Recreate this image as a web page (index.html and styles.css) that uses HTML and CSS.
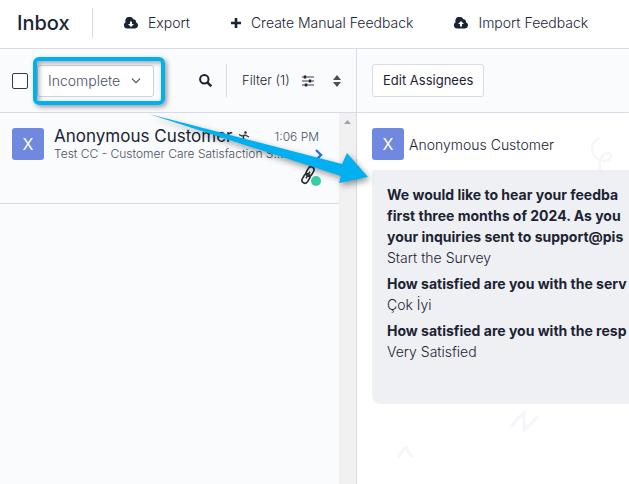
FILE: index.html
```html
<!DOCTYPE html>
<html lang="en">
<head>
  <meta charset="utf-8">
  <title>Inbox</title>
  <link rel="stylesheet" href="styles.css">
</head>
<body>
  <header class="topbar">
    <h1>Inbox</h1>
    <nav class="actions">
      <button class="action">
        <svg width="14" height="12" viewBox="0 0 14 12"><path fill="#1b2433" d="M3.500 11.500A3.300 3.300 0 0 1 1.600 5.300 4 4 0 0 1 9.300 2.300a2.400 2.400 0 0 1 2.600 3A3.200 3.200 0 0 1 11 11.500z"/><path fill="#fff" d="M6 4.500h2v2.500h2L7 10 4 7h2z"/></svg>
        Export
      </button>
      <button class="action">
        <svg width="10" height="10" viewBox="0 0 10 10"><path stroke="#1b2433" stroke-width="2.600" d="M5 0v10M0 5h10"/></svg>
        Create Manual Feedback
      </button>
      <button class="action">
        <svg width="14" height="12" viewBox="0 0 14 12"><path fill="#1b2433" d="M3.500 11.500A3.300 3.300 0 0 1 1.600 5.300 4 4 0 0 1 9.300 2.300a2.400 2.400 0 0 1 2.600 3A3.200 3.200 0 0 1 11 11.500z"/><path fill="#fff" d="M6 9.500h2V7h2L7 4 4 7h2z"/></svg>
        Import Feedback
      </button>
    </nav>
  </header>

  <main class="panes">
    <section class="list">
      <div class="toolbar">
        <input type="checkbox" class="check" aria-label="Select all">
        <div class="status">
          <select class="status-select" aria-label="Status">
            <option>Incomplete</option>
          </select>
          <svg class="chevron" width="10" height="6" viewBox="0 0 10 6"><path fill="none" stroke="#4b5163" stroke-width="1.200" d="M1 .7l4 4 4-4"/></svg>
          <span class="highlight"></span>
        </div>
        <button class="icon-button search" aria-label="Search">
          <svg width="13" height="13" viewBox="0 0 13 13"><circle cx="5.300" cy="5.300" r="4.200" fill="none" stroke="#1b2433" stroke-width="2"/><path stroke="#1b2433" stroke-width="2.400" d="M8.300 8.300l4 4"/></svg>
        </button>
        <button class="filter">
          Filter (1)
          <svg width="12" height="12" viewBox="0 0 12 12"><path stroke="#343b4b" stroke-width="1.200" d="M0 2h12M0 6h12M0 10h12"/><path stroke="#1b2433" stroke-width="2.400" d="M3 .5v3M8 4.500v3M4 8.500v3"/></svg>
        </button>
        <button class="icon-button sort" aria-label="Sort">
          <svg width="8" height="12" viewBox="0 0 8 12"><path fill="#4a4d55" d="M0 5l4-5 4 5zM0 7h8l-4 5z"/></svg>
        </button>
      </div>

      <div class="list-body">
        <article class="item">
          <span class="avatar">X</span>
          <div class="item-main">
            <div class="item-top">
              <strong class="name">Anonymous Customer</strong>
              <svg class="source" width="12" height="12" viewBox="0 0 12 12"><circle cx="7.500" cy="1.500" r="1.300" fill="#2a3042"/><path fill="none" stroke="#2a3042" stroke-width="1.300" d="M1 3.500l3 1.500 3-1 4 2M6 4.500l-1 3-4 2M5 7l4 4"/></svg>
              <time>1:06 PM</time>
            </div>
            <div class="item-sub">
              <span>Test CC - Customer Care Satisfaction S...</span>
              <svg width="8" height="12" viewBox="0 0 8 12"><path fill="none" stroke="#2f6fdc" stroke-width="2.400" d="M1 2l5 5-4 4"/></svg>
            </div>
            <div class="item-tags">
              <svg width="20" height="20" viewBox="0 0 20 20"><g fill="none" stroke="#262a33" stroke-width="1.600" transform="rotate(30 7 9)"><rect x="4" y="0" width="6" height="10" rx="3"/><rect x="4" y="8" width="6" height="10" rx="3"/><path d="M7 5v8"/></g><circle cx="15" cy="15" r="5" fill="#35cda5"/></svg>
            </div>
          </div>
        </article>
        <div class="scroll">
          <svg width="7" height="4" viewBox="0 0 7 4"><path fill="#a3a3a3" d="M0 4l3.500-4L7 4z"/></svg>
        </div>
      </div>
    </section>

    <section class="detail">
      <div class="toolbar">
        <button class="assign">Edit Assignees</button>
      </div>
      <div class="conversation">
        <!-- faint doodles behind the chat -->
        <svg class="doodles" width="272" height="371" viewBox="357 113 272 371"><g fill="none" stroke="#f6f6fa" stroke-width="2.500" stroke-linecap="round"><path d="M599 138c-6 3-9 11-5 17 4 7 15 8 17 2 1-5-7-5-9 0-3 4-3 8-2 12"/><path stroke-width="3" d="M512 426q5-8 12-13v17q7-5 13-13M399 456q3-6 7-8l5 8"/></g></svg>
        <div class="sender">
          <span class="avatar">X</span>
          <span>Anonymous Customer</span>
        </div>
        <dl class="answers">
          <dt>We would like to hear your feedba<br>first three months of 2024. As you<br>your inquiries sent to support@pis</dt>
          <dd>Start the Survey</dd>
          <dt>How satisfied are you with the serv</dt>
          <dd>Çok İyi</dd>
          <dt>How satisfied are you with the resp</dt>
          <dd>Very Satisfied</dd>
        </dl>
      </div>
    </section>
  </main>

  <svg class="arrow" width="240" height="90" viewBox="140 105 240 90"><path fill="#00b0f0" d="M149 114l193 50 5-11 21 24-29 6 2-7z"/></svg>
</body>
</html>
```
FILE: styles.css
```css
* {
  box-sizing: border-box;
}

body {
  margin: 0;
  min-height: 100vh;
  display: flex;
  flex-direction: column;
  overflow: hidden;
  background: #fff;
  color: #1b2433;
  font-family: Inter, "Open Sans", sans-serif;
  font-size: 14px;
  font-weight: 300;
  line-height: 21px;
}

button {
  padding: 0;
  border: none;
  background: none;
  color: inherit;
  font: inherit;
  white-space: nowrap;
  cursor: pointer;
}

svg {
  flex: none;
}

.topbar {
  display: flex;
  align-items: center;
  height: 49px;
  padding-bottom: 3px;
  border-bottom: 1px solid #d9dae8;
}

h1 {
  margin: 0;
  width: 93px;
  padding-left: 17px;
  border-right: 1px solid #d9dae8;
  font-size: 20px;
  font-weight: 500;
  line-height: 30px;
}

.actions {
  display: flex;
  gap: 41px;
  padding-left: 31px;
}

.action {
  display: flex;
  align-items: center;
  gap: 10px;
}

.panes {
  flex: 1;
  display: grid;
  grid-template-columns: 357px 1fr;
}

.list {
  display: flex;
  flex-direction: column;
  border-right: 1px solid #d9dae8;
  background: #fafbfd;
}

.toolbar {
  display: flex;
  align-items: center;
  height: 64px;
  padding: 0 12px;
  border-bottom: 1px solid #d9dae8;
  background: #fafbfd;
}

.check {
  appearance: none;
  width: 16px;
  height: 16px;
  margin: 0 9px 0 0;
  border: 1px solid #33394f;
  border-radius: 2px;
  background: #fff;
}

.status {
  position: relative;
  width: 117px;
}

.status-select {
  appearance: none;
  width: 100%;
  height: 32px;
  padding: 0 10px;
  border: 1px solid #d0d1e0;
  border-radius: 3px;
  background: #fff;
  color: #4b5163;
  font: inherit;
}

.chevron {
  position: absolute;
  right: 13px;
  top: 13px;
  pointer-events: none;
}

/* callout frame drawn around the drop-down */
.highlight {
  position: absolute;
  inset: -8px -11px -8px -4px;
  border: 4px solid #00b0f0;
  border-radius: 6px;
  box-shadow: 2px 2px 5px rgba(0, 0, 0, 0.4), inset 2px 2px 5px rgba(0, 0, 0, 0.35);
  pointer-events: none;
}

.icon-button {
  display: flex;
}

.search {
  margin-left: 45px;
}

.filter {
  display: flex;
  align-items: center;
  justify-content: space-between;
  width: 88px;
  height: 33px;
  margin-left: 14px;
  padding-left: 15px;
  border-left: 1px solid #d9dae8;
  font-size: 13px;
}

.sort {
  margin-left: auto;
  margin-right: 3px;
}

.list-body {
  flex: 1;
  display: flex;
}

.item {
  flex: 1;
  align-self: flex-start;
  display: flex;
  gap: 10px;
  min-width: 0;
  height: 91px;
  padding: 15px 20px 0 12px;
  border-bottom: 1px solid #d9dae8;
}

.avatar {
  flex: none;
  width: 32px;
  height: 32px;
  border-radius: 3px;
  background: #7088df;
  color: #fff;
  font-size: 16px;
  font-weight: 400;
  line-height: 32px;
  text-align: center;
}

.item-main {
  flex: 1;
  min-width: 0;
  white-space: nowrap;
}

.item-top {
  display: flex;
  align-items: center;
  height: 17px;
}

.name {
  font-size: 17px;
  font-weight: 400;
}

.source {
  margin-left: 6px;
}

time {
  margin-left: auto;
  color: #4b5163;
  font-size: 12px;
}

.item-sub {
  display: flex;
  align-items: center;
  justify-content: space-between;
  height: 17px;
  margin-right: -4px;
  color: #4b5163;
  font-size: 12px;
}

.item-tags {
  display: flex;
  justify-content: flex-end;
  margin: 4px -2px 0 0;
}

.scroll {
  width: 17px;
  padding-top: 4px;
  background: #f1f1f1;
  line-height: 4px;
  text-align: center;
}

.detail {
  display: flex;
  flex-direction: column;
  min-width: 0;
}

.detail .toolbar {
  padding: 0 15px;
}

.assign {
  height: 33px;
  padding: 0 10px;
  border: 1px solid #d9dae8;
  border-radius: 3px;
  background: #fff;
  font-size: 13px;
  font-weight: 400;
}

.conversation {
  position: relative;
  flex: 1;
  padding: 15px 0 0 15px;
  overflow: hidden;
}

.doodles {
  position: absolute;
  left: 0;
  top: 0;
}

.sender {
  display: flex;
  align-items: center;
  gap: 5px;
}

.answers {
  position: relative;
  margin: 10px 0 0;
  padding: 14px 0 37px 15px;
  border-bottom-left-radius: 8px;
  background: #eff0f4;
  white-space: nowrap;
}

.answers dt {
  font-weight: 700;
}

.answers dd {
  margin: 0 0 5px;
}

.arrow {
  position: absolute;
  left: 140px;
  top: 105px;
  filter: drop-shadow(2px 3px 3px rgba(0, 0, 0, 0.4));
  pointer-events: none;
}
```
